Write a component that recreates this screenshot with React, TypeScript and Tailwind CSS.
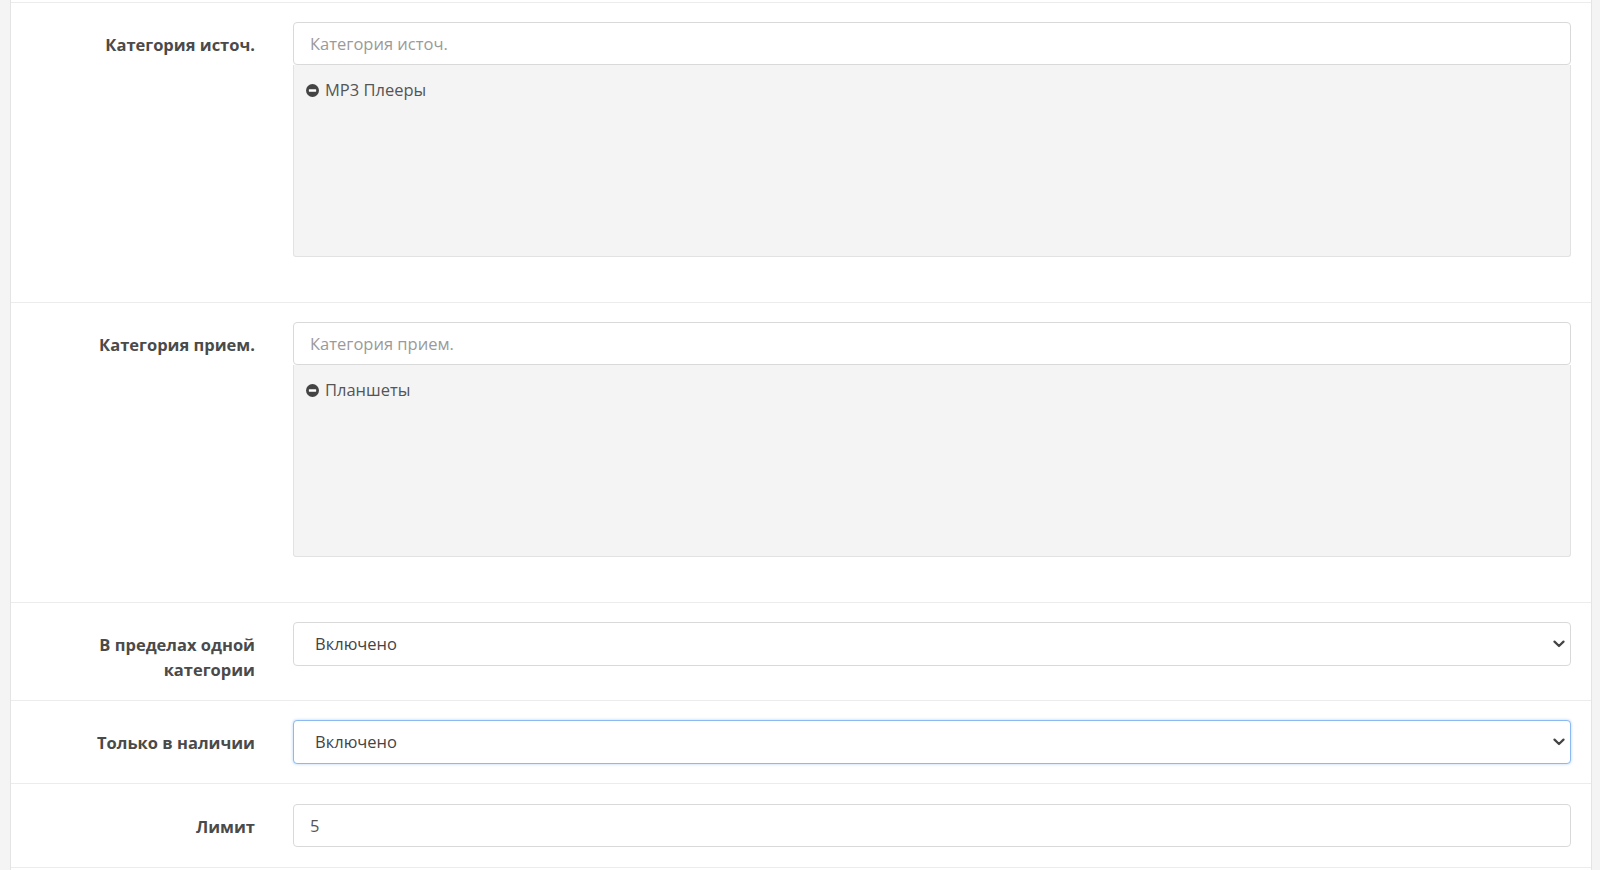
import React from "react";

const font = { fontFamily: '"Open Sans", "Noto Sans", sans-serif' };

function MinusCircle() {
  return (
    <svg width="13" height="13" viewBox="0 0 16 16" className="shrink-0">
      <circle cx="8" cy="8" r="8" fill="#444" />
      <rect x="3.5" y="6.6" width="9" height="2.8" rx="0.4" fill="#fff" />
    </svg>
  );
}

function Chevron() {
  return (
    <svg width="12" height="8" viewBox="0 0 12 8" className="pointer-events-none absolute right-[6px] top-1/2 -translate-y-1/2">
      <path d="M1.5 1.6 L6 6 L10.5 1.6" fill="none" stroke="#444" strokeWidth="2.2" strokeLinecap="round" strokeLinejoin="round" />
    </svg>
  );
}

function Label({ children }: { children: React.ReactNode }) {
  return (
    <div className="w-[282px] shrink-0 pr-[38px] pt-[10px] text-right text-[16.5px] font-bold leading-[25px] text-[#4a4a4a]">
      {children}
    </div>
  );
}

function TextInput({ placeholder, value }: { placeholder?: string; value?: string }) {
  return (
    <input
      readOnly
      placeholder={placeholder}
      defaultValue={value}
      className="block h-[43px] w-full rounded-[4px] border border-[#d9d9d9] bg-white px-[16px] text-[16.5px] text-[#555] outline-none placeholder:text-[#9a9a9a]"
      style={font}
    />
  );
}

function Well({ item }: { item: string }) {
  return (
    <div className="h-[192px] w-full rounded-b-[3px] border border-t-0 border-[#e2e2e2] bg-[#f4f4f4] px-[12px] pt-[13px]">
      <div className="flex items-center gap-[6px] text-[16.5px] leading-6 text-[#555]">
        <MinusCircle />
        <span>{item}</span>
      </div>
    </div>
  );
}

function Select({ focused }: { focused?: boolean }) {
  return (
    <div className="relative">
      <select
        defaultValue="1"
        className={
          "block h-[44px] w-full appearance-none rounded-[4px] border bg-white pl-[21px] pr-[40px] text-[16.5px] text-[#444] outline-none " +
          (focused
            ? "border-[#8bb9f2] shadow-[0_0_3px_rgba(90,150,230,0.45)]"
            : "border-[#d9d9d9]")
        }
        style={font}
      >
        <option value="1">Включено</option>
        <option value="0">Отключено</option>
      </select>
      <Chevron />
    </div>
  );
}

export default function App() {
  return (
    <div className="min-h-[870px] bg-[#f4f4f4] pl-[10px] pr-[8px]" style={font}>
      <div className="min-h-[870px] border-x border-[#e4e4e4] bg-white">
        <div className="h-[2px]" />
        {/* Row 1 */}
        <div className="flex border-t border-[#ececec] pt-[19px] pb-[45px]">
          <Label>Категория источ.</Label>
          <div className="flex-1 pr-[20px]">
            <TextInput placeholder="Категория источ." />
            <Well item="MP3 Плееры" />
          </div>
        </div>
        {/* Row 2 */}
        <div className="flex border-t border-[#ececec] pt-[19px] pb-[45px]">
          <Label>Категория прием.</Label>
          <div className="flex-1 pr-[20px]">
            <TextInput placeholder="Категория прием." />
            <Well item="Планшеты" />
          </div>
        </div>
        {/* Row 3 */}
        <div className="flex border-t border-[#ececec] pt-[19px] pb-[18px]">
          <Label>
            В пределах одной
            <br />
            категории
          </Label>
          <div className="flex-1 pr-[20px]">
            <Select />
          </div>
        </div>
        {/* Row 4 */}
        <div className="flex border-t border-[#ececec] pt-[19px] pb-[19px]">
          <Label>Только в наличии</Label>
          <div className="flex-1 pr-[20px]">
            <Select focused />
          </div>
        </div>
        {/* Row 5 */}
        <div className="flex border-y border-[#ececec] pt-[20px] pb-[20px]">
          <Label>Лимит</Label>
          <div className="flex-1 pr-[20px]">
            <TextInput value="5" />
          </div>
        </div>
      </div>
    </div>
  );
}
